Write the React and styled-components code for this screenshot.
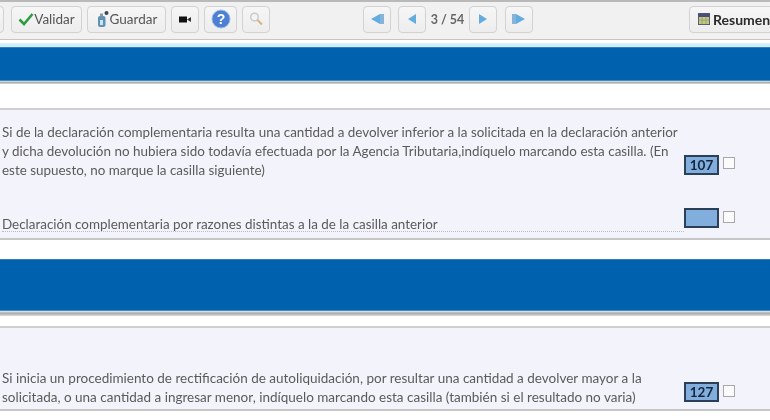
import React from 'react';
import styled, { createGlobalStyle } from 'styled-components';

const GlobalStyle = createGlobalStyle`
  html, body {
    margin: 0;
    padding: 0;
    background: #fff;
  }
`;

const Page = styled.div`
  width: 770px;
  height: 420px;
  overflow: hidden;
  background: #fff;
  font-family: Lato, "Open Sans", sans-serif;
  color: #555;
  filter: blur(0.55px);
`;

const Toolbar = styled.div`
  height: 40px;
  box-sizing: border-box;
  border-top: 2px solid #b9b9b9;
  border-bottom: 1px solid #c9c4bc;
  background: #f1f1f1;
  display: flex;
  align-items: center;
  padding: 0 0 3px 11px;
  position: relative;
  overflow: hidden;
`;

const ToolButton = styled.div`
  width: ${({ $w }) => $w}px;
  height: 27px;
  margin-left: ${({ $ml }) => $ml || 0}px;
  flex-shrink: 0;
  box-sizing: border-box;
  border: 1px solid #d2d2d2;
  border-radius: 4px;
  background: linear-gradient(#f6f6f6, #ededed);
  display: flex;
  align-items: center;
  justify-content: ${({ $start }) => ($start ? 'flex-start' : 'center')};
  gap: ${({ $start }) => ($start ? 3 : 0)}px;
  padding-left: ${({ $start }) => ($start ? 8 : 0)}px;
  font-size: ${({ $bold }) => ($bold ? 14 : 13.5)}px;
  font-weight: ${({ $bold }) => ($bold ? 700 : 400)};
  color: ${({ $bold }) => ($bold ? '#2b2b2b' : '#555')};
  white-space: nowrap;
`;

const CutButton = styled(ToolButton)`
  position: absolute;
  left: -24px;
  top: 4px;
`;

const PageCount = styled.span`
  width: 43px;
  flex-shrink: 0;
  text-align: center;
  font-size: 12.5px;
  font-weight: 700;
  color: #666;
`;

const TopRule = styled.div`
  height: 7px;
  background: linear-gradient(#fff, #fff 30%, #cfeefa 60%, #cfeefa);
`;

const Band = styled.div`
  height: ${({ $h }) => $h}px;
  background: #0061ae;
  border-top: 1px solid #2f7fb8;
  border-bottom: 1px solid #3f8cc4;
  box-sizing: border-box;
`;

const BandRule = styled.div`
  height: ${({ $h }) => $h}px;
  background: linear-gradient(#e6eef4, #a9a9a9 45%, #e2ddd4);
`;

const Gap = styled.div`
  height: ${({ $h }) => $h}px;
  background: #fff;
`;

const Section = styled.div`
  height: ${({ $h }) => $h}px;
  box-sizing: border-box;
  background: #f3f4fb;
  border-top: 2px solid #cfcfcf;
  border-bottom: 2px solid #c6c6c6;
  padding-top: ${({ $pt }) => $pt}px;
  display: flex;
  flex-direction: column;
`;

const Row = styled.div`
  display: flex;
  align-items: flex-start;
  margin-top: ${({ $mt }) => $mt || 0}px;
  padding-left: 2px;
`;

const RowText = styled.div`
  width: 682px;
  flex-shrink: 0;
  font-size: ${({ $fs }) => $fs || 13.43}px;
  line-height: 19px;
  color: #5a5a5a;
  white-space: nowrap;
`;

const Dotted = styled(RowText)`
  line-height: 14px;
  border-bottom: 1px dotted #bcbcbc;
`;

const Field = styled.div`
  width: 35px;
  height: 20px;
  margin-top: ${({ $mt }) => $mt || 0}px;
  flex-shrink: 0;
  box-sizing: border-box;
  border: 2px solid #2b3f58;
  background: #82aede;
  color: #15263c;
  font-size: 13.5px;
  font-weight: 700;
  text-align: center;
  line-height: 17px;
`;

const Check = styled.div`
  width: 12px;
  height: 12px;
  margin-left: 4px;
  margin-top: ${({ $mt }) => $mt || 0}px;
  flex-shrink: 0;
  box-sizing: border-box;
  border: 1px solid #a8a8a8;
  background: #fbfbfb;
`;

const CheckIcon = () => (
  <svg width="16" height="14" viewBox="0 0 16 14">
    <path d="M1.5 7.5 L6 12 L14.5 2" fill="none" stroke="#2f9a3f" strokeWidth="2.6" />
  </svg>
);

const SaveIcon = () => (
  <svg width="14" height="18" viewBox="0 0 14 18">
    <rect x="2" y="6" width="7.5" height="11" rx="2" fill="#5f93b5" />
    <rect x="4" y="10" width="3" height="5" fill="#cfe3ef" />
    <rect x="4" y="3.5" width="3" height="3" fill="#8a9aa5" />
    <circle cx="10.5" cy="3" r="2" fill="#3c4650" />
  </svg>
);

const VideoIcon = () => (
  <svg width="14" height="9" viewBox="0 0 14 9">
    <rect x="1" y="1.5" width="8" height="6" fill="#111" />
    <path d="M9 4.5 L13 2 V7 Z" fill="#333" />
  </svg>
);

const HelpIcon = () => (
  <svg width="20" height="20" viewBox="0 0 20 20">
    <circle cx="10" cy="10" r="9" fill="#4d7fd2" stroke="#9db9e6" strokeWidth="1" />
    <text x="10" y="15" textAnchor="middle" fontFamily="Liberation Sans" fontWeight="700" fontSize="14" fill="#fff">?</text>
  </svg>
);

const SearchIcon = () => (
  <svg width="16" height="16" viewBox="0 0 16 16">
    <circle cx="6.5" cy="6" r="3.8" fill="#f4f4f4" stroke="#c9c9c9" strokeWidth="1.4" />
    <path d="M9.5 9 L14 13.5" stroke="#d8b48a" strokeWidth="2.2" />
  </svg>
);

const NavIcon = ({ dir, bar }) => (
  <svg width="16" height="14" viewBox="0 0 16 14">
    <g transform={dir === 'left' ? 'matrix(-1 0 0 1 16 0)' : undefined}>
      {bar && <rect x="1" y="2" width="4" height="10" fill="#85b4d8" />}
      <path d={bar ? 'M5 2 L14 7 L5 12 Z' : 'M4 2 L12 7 L4 12 Z'} fill="#62acdf" />
    </g>
  </svg>
);

const TableIcon = () => (
  <svg width="12" height="12" viewBox="0 0 12 12">
    <rect x="0.5" y="0.5" width="11" height="11" fill="#c3c87e" stroke="#555b78" />
    <rect x="0.5" y="0.5" width="11" height="3.5" fill="#4a4f78" />
    <path d="M0.5 7 H11.5 M4 4 V11.5 M8 4 V11.5" stroke="#8f9470" strokeWidth="0.7" />
  </svg>
);

export default function App() {
  return (
    <Page>
      <GlobalStyle />
      <Toolbar>
        <CutButton $w={28} />
        <ToolButton $w={71}>
          <CheckIcon />
          Validar
        </ToolButton>
        <ToolButton $w={79} $ml={5}>
          <SaveIcon />
          Guardar
        </ToolButton>
        <ToolButton $w={28} $ml={5}>
          <VideoIcon />
        </ToolButton>
        <ToolButton $w={33} $ml={5}>
          <HelpIcon />
        </ToolButton>
        <ToolButton $w={28} $ml={5}>
          <SearchIcon />
        </ToolButton>
        <ToolButton $w={28} $ml={93}>
          <NavIcon dir="left" bar />
        </ToolButton>
        <ToolButton $w={28} $ml={7}>
          <NavIcon dir="left" />
        </ToolButton>
        <PageCount>3 / 54</PageCount>
        <ToolButton $w={28}>
          <NavIcon dir="right" />
        </ToolButton>
        <ToolButton $w={28} $ml={8}>
          <NavIcon dir="right" bar />
        </ToolButton>
        <ToolButton $w={110} $ml={156} $start $bold>
          <TableIcon />
          Resumen
        </ToolButton>
      </Toolbar>
      <TopRule />
      <Band $h={34} />
      <BandRule $h={3} />
      <Gap $h={24} />
      <Section $h={132} $pt={13}>
        <Row>
          <RowText>
            Si de la declaración complementaria resulta una cantidad a devolver inferior a la solicitada en la declaración anterior
            <br />
            y dicha devolución no hubiera sido todavía efectuada por la Agencia Tributaria,indíquelo marcando esta casilla. (En
            <br />
            este supuesto, no marque la casilla siguiente)
          </RowText>
          <Field $mt={32}>107</Field>
          <Check $mt={34} />
        </Row>
        <Row $mt={37}>
          <Dotted>Declaración complementaria por razones distintas a la de la casilla anterior</Dotted>
          <Field $mt={-9}>&nbsp;</Field>
          <Check $mt={-6} />
        </Row>
      </Section>
      <Gap $h={19} />
      <Band $h={52} />
      <BandRule $h={5} />
      <Gap $h={10} />
      <Section $h={85} $pt={41}>
        <Row>
          <RowText $fs={13.5}>
            Si inicia un procedimiento de rectificación de autoliquidación, por resultar una cantidad a devolver mayor a la
            <br />
            solicitada, o una cantidad a ingresar menor, indíquelo marcando esta casilla (también si el resultado no varia)
          </RowText>
          <Field $mt={13}>127</Field>
          <Check $mt={16} />
        </Row>
      </Section>
    </Page>
  );
}
